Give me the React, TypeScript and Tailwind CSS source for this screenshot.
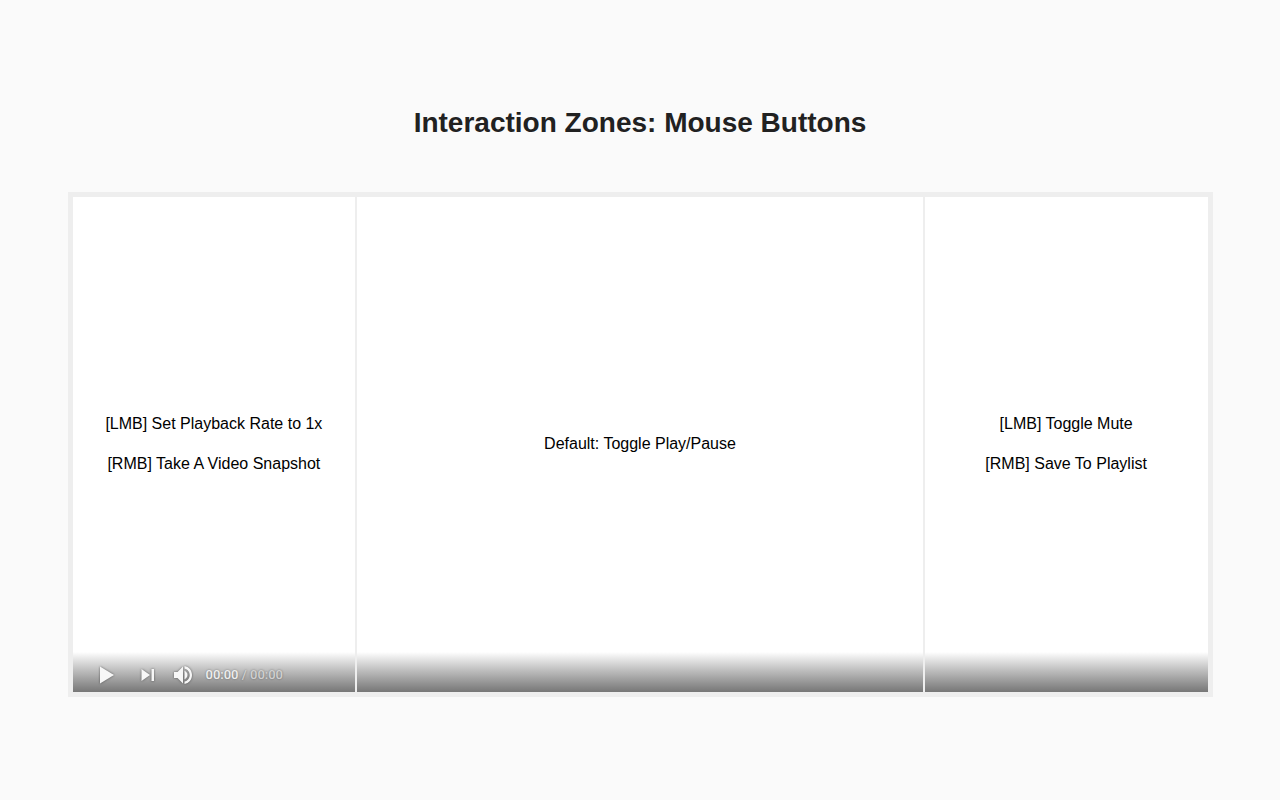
import type { ReactNode } from "react";

const Zone = ({ lines, children }: { lines: string[]; children?: ReactNode }) => {
  return (
    <section className="flex flex-col bg-white">
      <div className="flex flex-1 flex-col items-center justify-center gap-5 pt-[38px] text-center text-base leading-5">
        {lines.map((line) => (
          <p key={line}>{line}</p>
        ))}
      </div>
      <div className="flex h-10 items-center bg-linear-to-b from-white to-[#777777]">
        {children}
      </div>
    </section>
  );
};

// Play, next, volume and time at the left end of the bar
const Controls = () => {
  return (
    <div className="flex items-center pt-1.5 pl-[23px]">
      <button type="button" aria-label="Play" className="drop-shadow-[0_0_1px_rgba(0,0,0,0.5)]">
        <svg width="20" height="20" viewBox="0 0 20 20" fill="#f7f7f7">
          <path d="M4 1.5 L18 10 L4 18.5 Z" />
        </svg>
      </button>
      <button type="button" aria-label="Next" className="ml-5 drop-shadow-[0_0_1px_rgba(0,0,0,0.5)]">
        <svg width="20" height="20" viewBox="0 0 20 20" fill="#f7f7f7">
          <path d="M5.5 4 L14 10 L5.5 16 Z M15.5 4 H18 V16 H15.5 Z" />
        </svg>
      </button>
      <button type="button" aria-label="Mute" className="ml-3.5 drop-shadow-[0_0_1px_rgba(0,0,0,0.5)]">
        <svg width="24" height="24" viewBox="0 0 24 24" fill="#f7f7f7">
          <path d="M4 9 H7.5 L13 3.5 V20.5 L7.5 15 H4 Z" />
          <path d="M14.5 7.8 C16.3 8.6 17.5 10.1 17.5 12 C17.5 13.9 16.3 15.4 14.5 16.2 Z" />
          <path d="M14.5 3 C18.9 3.8 22 7.4 22 12 C22 16.6 18.9 20.2 14.5 21 V18.6 C17.6 17.8 19.7 15.2 19.7 12 C19.7 8.8 17.6 6.2 14.5 5.4 Z" />
        </svg>
      </button>
      <div className="ml-3 font-['Roboto',sans-serif] text-[13px] leading-5 font-medium whitespace-pre text-[#eeeeee] text-shadow-[0_0_2px_rgba(0,0,0,0.4)]">
        <span>00:00</span>
        <span className="text-[#d0d0d0]"> / 00:00</span>
      </div>
    </div>
  );
};

const App = () => {
  return (
    <main className="flex min-h-screen flex-col items-center justify-center bg-[#fafafa] px-4 font-['Liberation_Sans',Arial,sans-serif] text-black">
      <h1 className="mb-[49px] text-[28px] leading-10 font-bold text-[#212121]">
        Interaction Zones: Mouse Buttons
      </h1>
      <div className="grid min-h-[505px] w-full max-w-[1145px] grid-cols-[1fr_2fr_1fr] gap-0.5 border-5 border-[#eeeeee] bg-[#eeeeee]">
        <Zone lines={["[LMB] Set Playback Rate to 1x", "[RMB] Take A Video Snapshot"]}>
          <Controls />
        </Zone>
        <Zone lines={["Default: Toggle Play/Pause"]} />
        <Zone lines={["[LMB] Toggle Mute", "[RMB] Save To Playlist"]} />
      </div>
    </main>
  );
};

export default App;
